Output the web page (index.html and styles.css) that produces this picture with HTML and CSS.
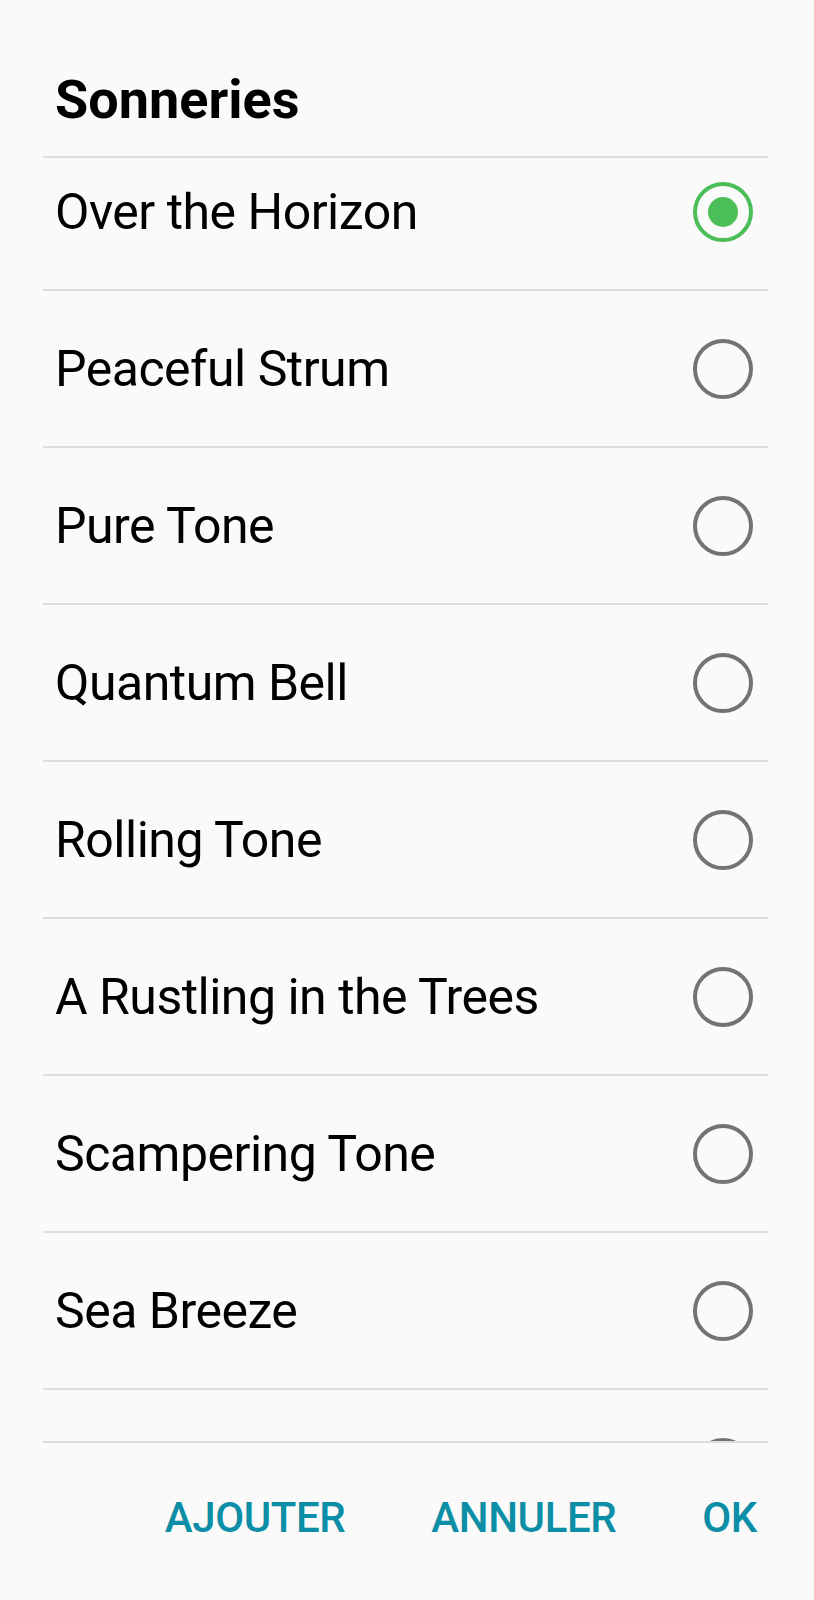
FILE: index.html
```html
<!DOCTYPE html>
<html lang="fr">
<head>
    <meta charset="UTF-8">
    <meta name="viewport" content="width=device-width, initial-scale=1.0">
    <title>Sonneries</title>
    <link rel="stylesheet" href="styles.css">
</head>
<body>
    <main class="dialog">
        <h1 class="dialog-title">Sonneries</h1>

        <div class="list">
            <ul class="tones">
                <li class="tone">
                    <span>Over the Horizon</span>
                    <svg class="radio" viewBox="0 0 60 60"><circle cx="30" cy="30" r="28" class="ring on"/><circle cx="30" cy="30" r="15" class="dot"/></svg>
                </li>
                <li class="tone">
                    <span>Peaceful Strum</span>
                    <svg class="radio" viewBox="0 0 60 60"><circle cx="30" cy="30" r="28" class="ring"/></svg>
                </li>
                <li class="tone">
                    <span>Pure Tone</span>
                    <svg class="radio" viewBox="0 0 60 60"><circle cx="30" cy="30" r="28" class="ring"/></svg>
                </li>
                <li class="tone">
                    <span>Quantum Bell</span>
                    <svg class="radio" viewBox="0 0 60 60"><circle cx="30" cy="30" r="28" class="ring"/></svg>
                </li>
                <li class="tone">
                    <span>Rolling Tone</span>
                    <svg class="radio" viewBox="0 0 60 60"><circle cx="30" cy="30" r="28" class="ring"/></svg>
                </li>
                <li class="tone">
                    <span>A Rustling in the Trees</span>
                    <svg class="radio" viewBox="0 0 60 60"><circle cx="30" cy="30" r="28" class="ring"/></svg>
                </li>
                <li class="tone">
                    <span>Scampering Tone</span>
                    <svg class="radio" viewBox="0 0 60 60"><circle cx="30" cy="30" r="28" class="ring"/></svg>
                </li>
                <li class="tone">
                    <span>Sea Breeze</span>
                    <svg class="radio" viewBox="0 0 60 60"><circle cx="30" cy="30" r="28" class="ring"/></svg>
                </li>
                <li class="tone">
                    <span></span>
                    <svg class="radio" viewBox="0 0 60 60"><circle cx="30" cy="30" r="28" class="ring"/></svg>
                </li>
            </ul>
        </div>

        <div class="actions">
            <button class="btn">AJOUTER</button>
            <button class="btn">ANNULER</button>
            <button class="btn">OK</button>
        </div>
    </main>
</body>
</html>
```

FILE: styles.css
```css
* {
    padding: 0;
    margin: 0;
    box-sizing: border-box;
    font-family: Roboto, 'Liberation Sans', sans-serif;
}

:root {
    --bg: #fafafa;
    --line: #dddddd;
    --green: #4cbe57;
    --gray: #737373;
    --teal: #0c8ea7;
}

body {
    background: var(--bg);
}

.dialog {
    height: 1600px;
    display: flex;
    flex-direction: column;
}

.dialog-title {
    height: 156px;
    padding: 71px 0 0 55px;
    font-size: 54px;
    line-height: 58px;
    font-weight: 700;
    color: #000;
}

.list {
    margin: 0 46px 0 43px;
    height: 1287px;
    overflow: hidden;
    border-top: 2px solid var(--line);
    border-bottom: 2px solid var(--line);
}

.tones {
    list-style: none;
    margin-top: -24px;
}

.tone {
    height: 157px;
    display: flex;
    align-items: center;
    justify-content: space-between;
    padding: 0 15px 0 12px;
    border-bottom: 2px solid var(--line);
    font-size: 50px;
    letter-spacing: -0.5px;
    color: #000;
}

.radio {
    width: 60px;
    height: 60px;
}

.ring {
    fill: none;
    stroke: var(--gray);
    stroke-width: 4;
}

.ring.on {
    stroke: var(--green);
}

.dot {
    fill: var(--green);
}

.actions {
    flex: 1;
    display: flex;
    justify-content: flex-end;
    align-items: center;
    gap: 86px;
    padding: 0 57px 8px 0;
}

.btn {
    background: none;
    border: none;
    font-size: 42px;
    font-weight: 500;
    letter-spacing: -0.4px;
    color: var(--teal);
}
```
